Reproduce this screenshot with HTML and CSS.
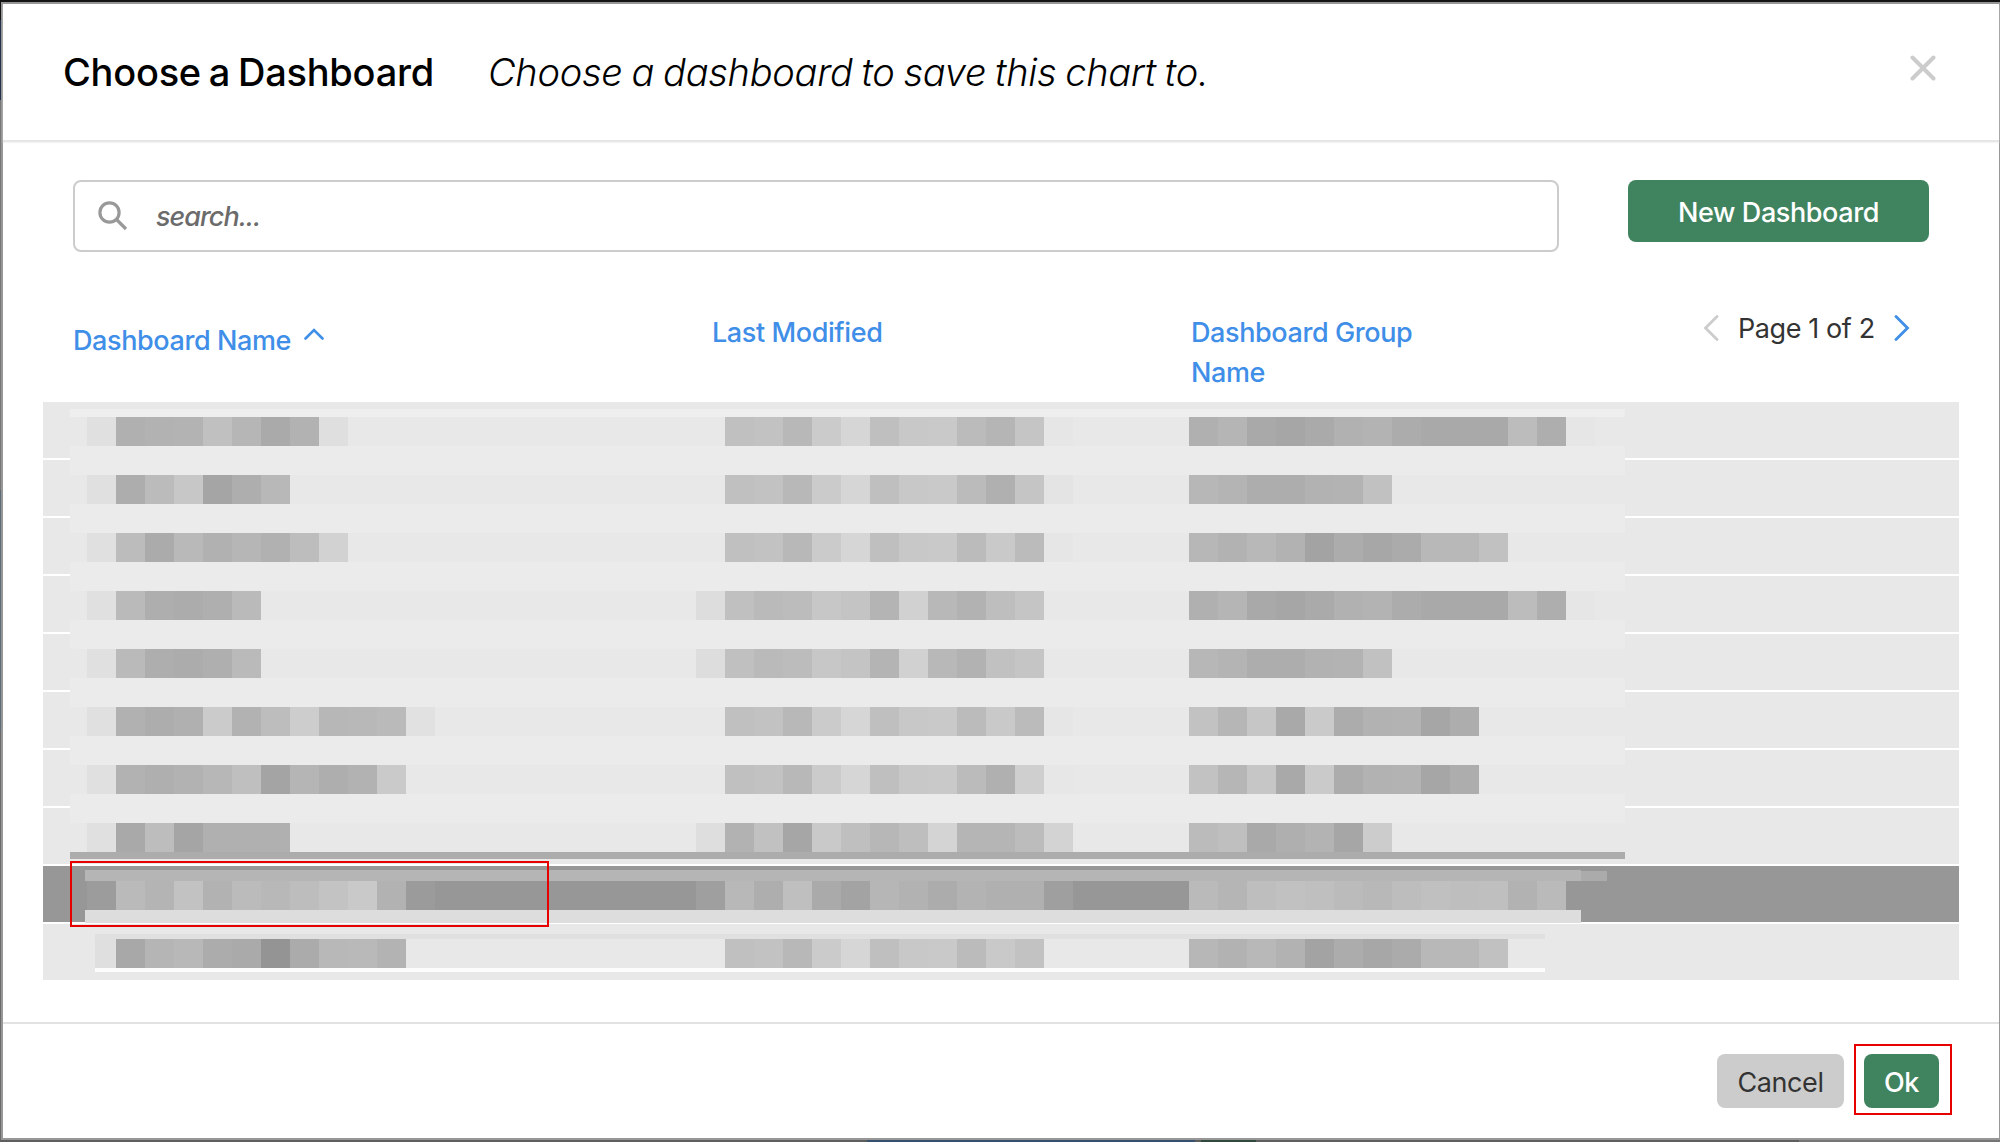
FILE: index.html
```html
<!DOCTYPE html>
<html lang="en">
<head>
<meta charset="utf-8">
<title>Choose a Dashboard</title>
<link rel="stylesheet" href="styles.css">
</head>
<body>
<div class="modal">
  <header class="modal-header">
    <h1 class="title">Choose a Dashboard</h1>
    <p class="subtitle">Choose a dashboard to save this chart to.</p>
    <svg class="close" viewBox="0 0 26 26" width="26" height="26"><path d="M2.5 2.5 23.5 23.5M23.5 2.5 2.5 23.5"/></svg>
  </header>
  <main class="modal-body">
    <div class="toolbar">
      <label class="search">
        <svg class="search-icon" viewBox="0 0 30 30" width="30" height="30"><circle cx="11.5" cy="11.5" r="9.6"/><path d="M18 18 28 28"/></svg>
        <span class="search-text">search...</span>
      </label>
      <button class="btn btn-new">New Dashboard</button>
    </div>
    <div class="columns">
      <div class="col col-name"><span class="t-name">Dashboard Name</span><svg class="sort" viewBox="0 0 20 12" width="20" height="12"><path d="M1.5 10.5 10 2 18.500 10.500"/></svg></div>
      <div class="col col-modified">Last Modified</div>
      <div class="col col-group">Dashboard Group Name</div>
      <nav class="pager">
        <svg class="prev" viewBox="0 0 16 26" width="16" height="26"><path d="M14 1.500 2.500 13 14 24.500"/></svg>
        <span class="page-text">Page 1 of 2</span>
        <svg class="next" viewBox="0 0 16 26" width="16" height="26"><path d="M2 1.500 13.500 13 2 24.500"/></svg>
      </nav>
    </div>
    <div class="table">
      <div class="row"></div><div class="row"></div><div class="row"></div><div class="row"></div><div class="row"></div>
      <div class="row"></div><div class="row"></div><div class="row"></div><div class="row selected"></div><div class="row"></div>
      <div class="mask mask-main" data-from="0" data-to="8"></div>
      <div class="mask mask-tail"></div>
      <div class="mask mask-selected" data-from="8" data-to="9"></div>
      <div class="mask mask-last" data-from="9" data-to="10"></div>
      <div class="highlight highlight-row"></div>
    </div>
  </main>
  <footer class="modal-footer">
    <button class="btn btn-cancel">Cancel</button>
    <div class="ok-wrap"><button class="btn btn-ok">Ok</button></div>
  </footer>
</div>
<script src="mask.js"></script>
</body>
</html>
```
FILE: styles.css
```css
* { box-sizing: border-box; }
body {
  margin: 0;
  width: 2000px;
  height: 1142px;
  overflow: hidden;
  padding: 2px 0 2px 1px;
  background:
    linear-gradient(90deg, #5e5e5e 0 867px, #35506f 867px 1195px, #5e5e5e 1195px 1201px, #2f4a3c 1201px 1256px, #5e5e5e 1256px 1799px, #757575 1799px) 0 1140px / 100% 2px no-repeat,
    linear-gradient(#131313 0 20px, #22304a 20px 100px, #777 100px 490px, #5b6b78 490px 730px, #6a6a6a 730px);
  font-family: Inter, "Liberation Sans", sans-serif;
  font-size: 27px;
  color: #333;
}
.modal {
  height: 1138px;
  display: flex;
  flex-direction: column;
  background: #fff;
  border: 2px solid #979797;
  border-right-width: 1px;
}
svg { fill: none; flex: none; }
.modal-header {
  display: flex;
  height: 138px;
  padding: 0 63px 0 61px;
  border-bottom: 2px solid #e6e6e6;
  box-shadow: 0 1px 1px #f4f4f4;
  color: #000;
  line-height: 48px;
  flex: none;
}
.title { margin: 44px 0 0 -1px; width: 425px; font-size: 38px; font-weight: 550; letter-spacing: -0.25px; word-spacing: -2px; white-space: nowrap; }
.subtitle { margin: 44px 0 0; font-size: 38px; font-weight: 330; font-style: italic; letter-spacing: -0.28px; word-spacing: -1.5px; white-space: nowrap; }
.close { margin: 51px 0 0 auto; stroke: #ccc; stroke-width: 4; stroke-linecap: round; }
.modal-body { flex: 1; padding: 38px 40px 0; }
.toolbar { display: flex; justify-content: space-between; padding: 0 30px; align-items: flex-start; }
.search {
  display: flex;
  align-items: center;
  width: 1486px;
  height: 72px;
  border: 2px solid #ccc;
  border-radius: 8px;
  padding-left: 23px;
}
.search-icon { stroke: #999; stroke-width: 3.2; }
.search-text { margin-left: 28px; font-style: italic; font-weight: 500; letter-spacing: -1px; color: #6b6b6b; }
.btn { border: 0; padding: 2px 0 0; border-radius: 8px; font: 500 27px Inter, "Liberation Sans", sans-serif; letter-spacing: -0.4px; white-space: nowrap; }
.btn-new { width: 301px; height: 62px; background: #40835f; color: #fff; }
.columns {
  display: grid;
  grid-template-columns: 639px 479px 512px 1fr;
  height: 150px;
  padding: 61px 0 0 30px;
  line-height: 40px;
  color: #3f8ee8;
}
.col { white-space: nowrap; font-weight: 450; letter-spacing: -0.4px; }
.col-name { padding-top: 8px; display: flex; }
.sort { margin: 7px 0 0 13px; stroke: currentColor; stroke-width: 2.6; stroke-linecap: round; }
.col-group { width: 260px; white-space: normal; }
.pager { display: flex; margin-top: -4px; }
.pager svg { margin-top: 6px; stroke-width: 2.8; stroke-linecap: round; }
.prev { stroke: #ccc; }
.next { stroke: #3f8ee8; }
.page-text { width: 175px; padding-left: 19px; color: #333; letter-spacing: -0.4px; white-space: nowrap; }
.table { position: relative; display: grid; grid-auto-rows: 56px; gap: 2px; width: 1916px; }
.row { background: #e8e8e8; }
.selected { background: #979797; }
.mask { position: absolute; overflow: hidden; }
.mask-main {
  left: 27px; top: 7px; width: 1555px; height: 450px;
  display: grid; grid-auto-rows: 29px; gap: 29px;
  background: #ebebeb;
  border-top: 8px solid #eee;
  border-bottom: 7px solid #acacac;
  --base: #e8e8e8;
}
.mask-main .strip { padding-left: 17px; }
.mask-selected {
  left: 42px; top: 468px; width: 1496px; height: 53px;
  border-top: 11px solid #b5b5b5; border-bottom: 13px solid #ddd;
  --base: #979797;
}
.mask-selected .strip { padding-left: 2px; }
.mask-tail { left: 1538px; top: 469px; width: 26px; height: 10px; background: #ababab; }
.mask-last {
  left: 52px; top: 532px; width: 1450px; height: 38px;
  border-top: 5px solid #e0e0e0; border-bottom: 4px solid #fcfcfc;
  --base: #e8e8e8;
}
.mask-last .strip { margin-left: -8px; }
.strip { display: flex; height: 29px; background: var(--base); }
.cells { display: flex; flex: none; }
.cells:nth-child(1) { width: 609px; }
.cells:nth-child(2) { width: 493px; }
.cells i { width: 29px; height: 29px; flex: none; }
.highlight { position: absolute; border: 2px solid #e60000; }
.highlight-row { left: 27px; top: 459px; width: 479px; height: 66px; }
.modal-footer {
  display: flex;
  justify-content: flex-end;
  height: 116px;
  padding: 20px 47px 0 0;
  border-top: 2px solid #e2e2e2;
  flex: none;
}
.btn-cancel { width: 127px; height: 54px; margin: 10px 10px 0 0; background: #ccc; color: #333; font-weight: 400; }
.ok-wrap { width: 98px; height: 71px; border: 2px solid #e60000; padding: 8px; }
.btn-ok { display: block; width: 75px; height: 54px; background: #40835f; color: #fff; }
```
FILE: mask.js
```js
// Grey levels (two hex digits each) of the redaction blocks, per row: name | modified | group.
const rows = [
  "e0 b0 b2 b3 c0 b6 aa b2 df|e8 c0 c2 b8 cb d6 bf c8 c9 bb b5 c5 e6|b0 b5 a9 a6 aa b1 b3 ac a9 a9 a9 bc ae e6",
  "e0 ad bb c7 a5 ae b8|e8 c0 c2 b8 cb d6 bf c8 c9 bb b0 c5 e4|b7 b4 ad ad b2 b3 c1",
  "e0 bc ab b9 b1 b6 b1 bd d2|e8 c0 c2 b8 cb d6 bf c8 c9 bb c9 bb e6|b7 b2 b8 b2 a3 ac a7 ab b8 b8 c1",
  "e0 ba ae ac af ba|dd c0 ba bc c7 c4 b4 d1 b8 b2 be c5|b0 b5 a9 a6 aa b1 b3 ac a9 a9 a9 bc ae e6",
  "e0 ba ae ac af ba|dd c0 ba bc c7 c4 b4 d1 b8 b2 c1 c5|b7 b4 ad ad b2 b3 c1",
  "e0 b1 ad b0 cb b2 bd cd b7 b8 ba e1|e8 c0 c2 b8 cb d6 bf c8 c9 bb c9 bb e6|c2 b6 c6 a9 ca ac b2 b3 a6 ad",
  "e0 b2 af b2 b7 bf a4 b5 ae b2 ca|e8 c0 c2 b8 cb d6 bf c8 c9 bb b0 cf e7|c2 b6 c6 a9 ca ac b2 b3 a6 ad",
  "e0 a9 bd a5 b0 b0 b0|de b2 c1 a6 c9 bf b7 be d4 b5 b5 bc d3|bb bf a9 af b3 a6 cc",
  "9c ba b4 c2 b2 bb b8 bd c3 c9 b2 9b|9f b8 ae bf aa a3 b6 b2 ac b3 b0 b0 9f|ba b5 be c1 bf bb b8 bd c0 be bf b2 ba",
  "df a8 b5 b8 ac aa 94 ab b8 b9 b3|e8 c0 c2 b8 cb d6 bf c8 c9 bb c9 c2|b7 b2 b8 b2 a3 ac a7 ab b8 b8 c1"
];
document.querySelectorAll(".mask[data-from]").forEach(mask => {
  mask.innerHTML = rows.slice(+mask.dataset.from, +mask.dataset.to).map(row =>
    `<div class="strip">${row.split("|").map(group =>
      `<div class="cells">${group.split(" ").map(g => `<i style="background:#${g}${g}${g}"></i>`).join("")}</div>`
    ).join("")}</div>`
  ).join("");
});
```
